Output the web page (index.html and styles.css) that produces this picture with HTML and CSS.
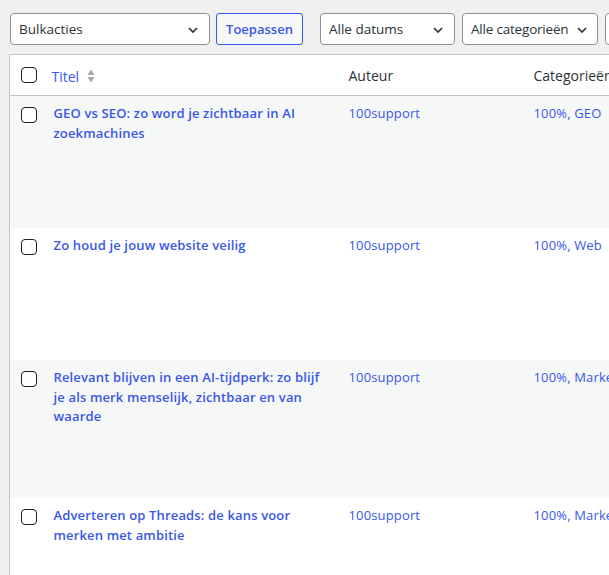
FILE: index.html
```html
<!DOCTYPE html>
<html lang="nl">
<head>
  <meta charset="UTF-8">
  <meta name="viewport" content="width=device-width, initial-scale=1.0">
  <title>Berichten</title>
  <link rel="stylesheet" href="styles.css">
</head>
<body>
  <div id="posts-wrap">
    <div class="tablenav">
      <div class="dropdown bulk">
        <span>Bulkacties</span>
        <svg class="chevron" width="10" height="6" viewBox="0 0 10 6"><path d="M1 1l4 4 4-4" /></svg>
      </div>
      <button class="apply-button">Toepassen</button>
      <div class="dropdown dates">
        <span>Alle datums</span>
        <svg class="chevron" width="10" height="6" viewBox="0 0 10 6"><path d="M1 1l4 4 4-4" /></svg>
      </div>
      <div class="dropdown cats">
        <span>Alle categorieën</span>
        <svg class="chevron" width="10" height="6" viewBox="0 0 10 6"><path d="M1 1l4 4 4-4" /></svg>
      </div>
      <div class="dropdown more"></div>
    </div>

    <table class="post-list">
      <colgroup>
        <col class="col-check">
        <col class="col-title">
        <col class="col-author">
        <col class="col-cats">
      </colgroup>
      <thead>
        <tr>
          <th class="check-cell"><input type="checkbox"></th>
          <th class="title-head">
            <a href="#">Titel</a>
            <svg class="sort-icon" width="8" height="14" viewBox="0 0 8 14">
              <path d="M4 0.5l3.5 5.5h-7z" />
              <path d="M0.5 8h7l-3.5 5.5z" />
            </svg>
          </th>
          <th>Auteur</th>
          <th>Categorieën</th>
        </tr>
      </thead>
      <tbody>
        <tr class="row-a">
          <td class="check-cell"><input type="checkbox"></td>
          <td class="title-cell"><a href="#">GEO vs SEO: zo word je zichtbaar in AI zoekmachines</a></td>
          <td><a href="#">100support</a></td>
          <td><a href="#">100%</a>, <a href="#">GEO</a></td>
        </tr>
        <tr class="row-b">
          <td class="check-cell"><input type="checkbox"></td>
          <td class="title-cell"><a href="#">Zo houd je jouw website veilig</a></td>
          <td><a href="#">100support</a></td>
          <td><a href="#">100%</a>, <a href="#">Web</a></td>
        </tr>
        <tr class="row-c">
          <td class="check-cell"><input type="checkbox"></td>
          <td class="title-cell"><a href="#">Relevant blijven in een AI-tijdperk: zo blijf je als merk menselijk, zichtbaar en van waarde</a></td>
          <td><a href="#">100support</a></td>
          <td><a href="#">100%</a>, <a href="#">Marketing</a></td>
        </tr>
        <tr class="row-d">
          <td class="check-cell"><input type="checkbox"></td>
          <td class="title-cell"><a href="#">Adverteren op Threads: de kans voor merken met ambitie</a></td>
          <td><a href="#">100support</a></td>
          <td><a href="#">100%</a>, <a href="#">Marketing</a></td>
        </tr>
      </tbody>
    </table>
  </div>
</body>
</html>
```

FILE: styles.css
```css
:root {
  --page-bg: #f0f0f1;
  --border: #c3c4c7;
  --field-border: #8c8f94;
  --text: #2c3338;
  --link: #3858e9;
  --stripe: #f6f7f7;
}

html, body {
  overflow: hidden;
}

body {
  margin: 0;
  font-family: "Open Sans", "Noto Sans", sans-serif;
  background-color: var(--page-bg);
  color: var(--text);
}

#posts-wrap {
  padding: 13px 0 0 9px;
}

.tablenav {
  display: flex;
  align-items: center;
  height: 32px;
  padding-left: 1px;
  white-space: nowrap;
}

.tablenav > * {
  flex-shrink: 0;
}

.dropdown {
  box-sizing: border-box;
  display: flex;
  align-items: center;
  justify-content: space-between;
  height: 32px;
  padding: 0 11px 0 8px;
  border: 1px solid var(--field-border);
  border-radius: 4px;
  background-color: #ffffff;
  font-size: 13.5px;
  color: var(--text);
}

.dropdown.bulk {
  width: 200px;
  margin-right: 6px;
}

.dropdown.dates {
  width: 135px;
  margin-right: 7px;
}

.dropdown.cats {
  width: 136px;
  margin-right: 7px;
  padding-right: 10px;
  letter-spacing: -0.2px;
}

.dropdown.more {
  width: 60px;
}

.chevron {
  flex-shrink: 0;
  margin-top: 2px;
}

.chevron path {
  fill: none;
  stroke: var(--text);
  stroke-width: 1.7;
}

.apply-button {
  box-sizing: border-box;
  width: 87px;
  height: 32px;
  margin-right: 17px;
  padding: 0;
  border: 1px solid var(--link);
  border-radius: 3px;
  background-color: var(--stripe);
  color: var(--link);
  font-family: inherit;
  font-size: 13px;
  font-weight: 600;
}

.post-list {
  margin-top: 9px;
  width: 760px;
  table-layout: fixed;
  border-collapse: collapse;
  border: 1px solid var(--border);
  background-color: #ffffff;
  font-size: 13px;
  letter-spacing: 0.15px;
}

.col-check { width: 32px; }
.col-title { width: 297px; }
.col-author { width: 185px; }
.col-cats { width: 246px; }

.post-list a {
  color: var(--link);
  text-decoration: none;
}

.post-list th {
  height: 40px;
  padding: 0 10px;
  text-align: left;
  font-size: 14px;
  font-weight: 400;
  letter-spacing: 0;
  color: var(--text);
  border-bottom: 1px solid var(--border);
  white-space: nowrap;
}

.title-head a {
  vertical-align: middle;
}

.sort-icon {
  vertical-align: middle;
  margin-left: 4px;
}

.sort-icon path {
  fill: #a7aaad;
}

.post-list td {
  padding: 8px 10px;
  vertical-align: top;
  line-height: 19.5px;
  color: var(--link);
}

.post-list td.title-cell {
  padding-left: 12px;
  font-weight: 600;
}

.post-list .check-cell {
  padding: 0 0 0 11px;
}

.post-list td.check-cell {
  padding-top: 11px;
}

.row-a, .row-c {
  background-color: var(--stripe);
}

.row-a td, .row-b td {
  height: 116px;
}

.row-c td {
  height: 122px;
}

.row-d td {
  height: 140px;
}

input[type="checkbox"] {
  appearance: none;
  display: block;
  box-sizing: border-box;
  width: 16px;
  height: 16px;
  margin: 0;
  border: 1px solid #1e1e1e;
  border-radius: 4px;
  background-color: #ffffff;
}
```
